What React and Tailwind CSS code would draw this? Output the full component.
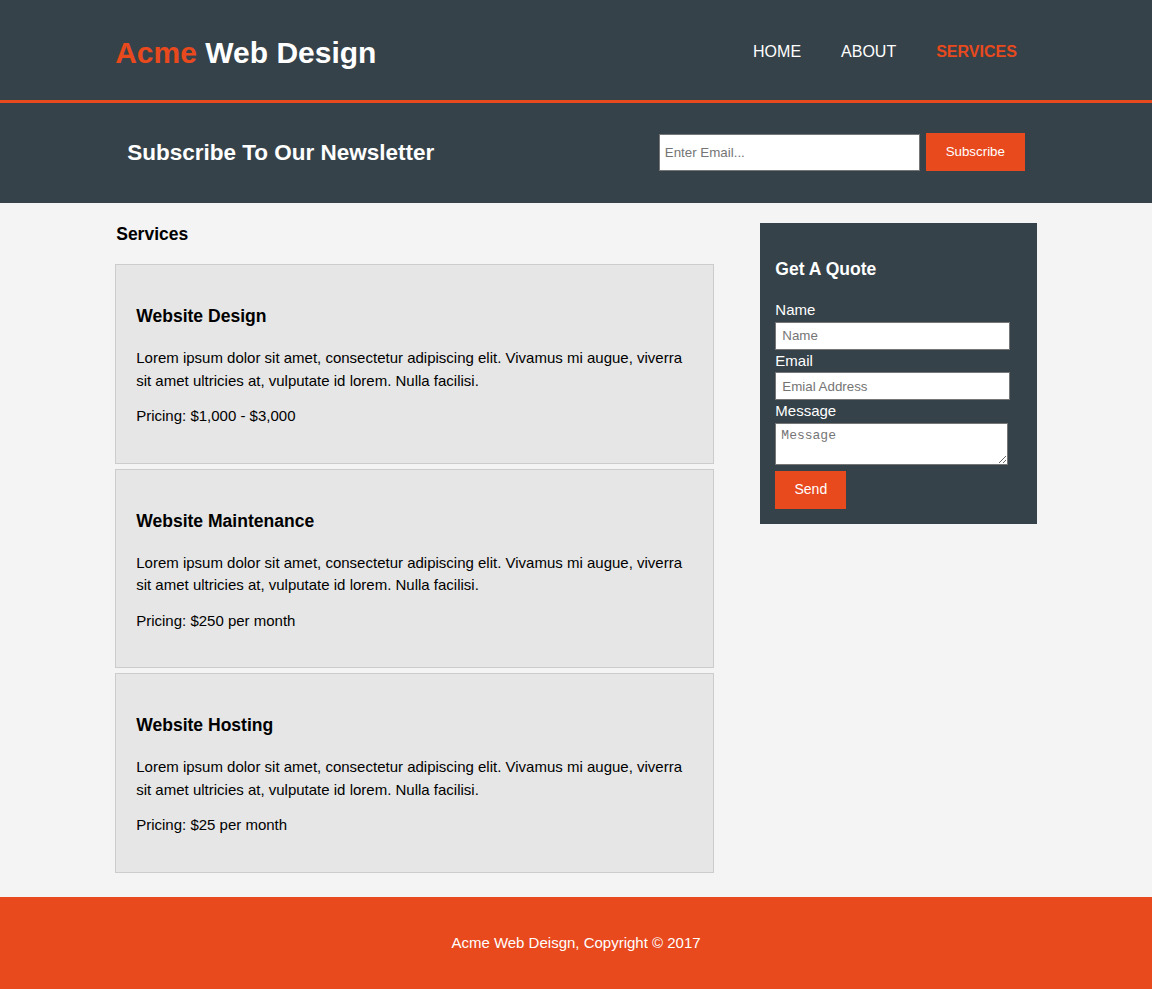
import React from "react";

const services = [
  { title: "Website Design", price: "Pricing: $1,000 - $3,000" },
  { title: "Website Maintenance", price: "Pricing: $250 per month" },
  { title: "Website Hosting", price: "Pricing: $25 per month" },
];

const lorem =
  "Lorem ipsum dolor sit amet, consectetur adipiscing elit. Vivamus mi augue, viverra sit amet ultricies at, vulputate id lorem. Nulla facilisi.";

const App = () => {
  return (
    <div className="min-h-[989px] bg-[#f4f4f4] text-[15px] leading-[1.5] text-black font-['Liberation_Sans',Arial,sans-serif]">
      {/* header */}
      <header className="bg-[#35424a] text-white pt-[30px] min-h-[70px] border-b-[3px] border-[#e8491d]">
        <div className="w-[80%] mx-auto flex justify-between">
          <h1 className="text-[30px] font-bold leading-[45px] pb-[25px]">
            <span className="text-[#e8491d]">Acme</span> Web Design
          </h1>
          <nav className="mt-[10px]">
            <ul className="flex text-[16px] leading-[24px] uppercase">
              <li className="px-5">Home</li>
              <li className="px-5">About</li>
              <li className="px-5 text-[#e8491d] font-bold">Services</li>
            </ul>
          </nav>
        </div>
      </header>

      {/* newsletter */}
      <section className="bg-[#35424a] text-white px-[15px] h-[100px]">
        <div className="w-[80%] mx-auto flex justify-between">
          <h1 className="text-[22.5px] font-bold leading-[28px] mt-[36px]">
            Subscribe To Our Newsletter
          </h1>
          <form className="mt-[30px] flex gap-[6px]">
            <input
              type="email"
              placeholder="Enter Email..."
              className="w-[261px] h-[37px] mt-px bg-white border border-[#767676] px-[5px] text-[13.33px] text-black placeholder:text-[#757575] outline-none"
            />
            <button
              type="button"
              className="h-[38px] w-[99px] bg-[#e8491d] text-white text-[13.33px]"
            >
              Subscribe
            </button>
          </form>
        </div>
      </section>

      {/* main */}
      <section className="w-[80%] mx-auto flex justify-between">
        <article className="w-[65%]">
          <h1 className="text-[17.5px] font-bold leading-[27px] mt-[18px] mb-[16px] pl-px">
            Services
          </h1>
          <ul className="flex flex-col gap-[5px]">
            {services.map((s) => (
              <li
                key={s.title}
                className="bg-[#e6e6e6] border border-[#ccc] px-5 pt-[38px] pb-[35px]"
              >
                <h3 className="text-[17.55px] font-bold leading-[26px]">{s.title}</h3>
                <p className="mt-[18px]">{lorem}</p>
                <p className="mt-[13px]">{s.price}</p>
              </li>
            ))}
          </ul>
        </article>

        <aside className="w-[30%] mt-[20px]">
          <div className="bg-[#35424a] text-white p-[15px] h-[301px]">
            <h3 className="text-[17.55px] font-bold leading-[26px] mt-[18px] mb-[17px]">
              Get A Quote
            </h3>
            <form>
              <label className="block">Name</label>
              <input
                type="text"
                placeholder="Name"
                className="block w-[235px] h-[28px] bg-white border border-[#767676] px-[6px] text-[13.33px] text-black placeholder:text-[#757575] outline-none"
              />
              <label className="block">Email</label>
              <input
                type="email"
                placeholder="Emial Address"
                className="block w-[235px] h-[28px] bg-white border border-[#767676] px-[6px] text-[13.33px] text-black placeholder:text-[#757575] outline-none"
              />
              <label className="block">Message</label>
              <textarea
                placeholder="Message"
                className="block w-[233px] h-[42px] bg-white border border-[#767676] px-[5px] py-[4px] text-[13px] leading-[16px] text-black font-['Liberation_Mono',monospace] placeholder:text-[#757575] outline-none"
              />
              <button
                type="button"
                className="mt-[6px] h-[38px] w-[71px] bg-[#e8491d] text-white text-[14px]"
              >
                Send
              </button>
            </form>
          </div>
        </aside>
      </section>

      {/* footer */}
      <footer className="mt-[24px] bg-[#e8491d] text-white text-center py-[35px] leading-[22px]">
        <p>Acme Web Deisgn, Copyright © 2017</p>
      </footer>
    </div>
  );
};

export default App;
